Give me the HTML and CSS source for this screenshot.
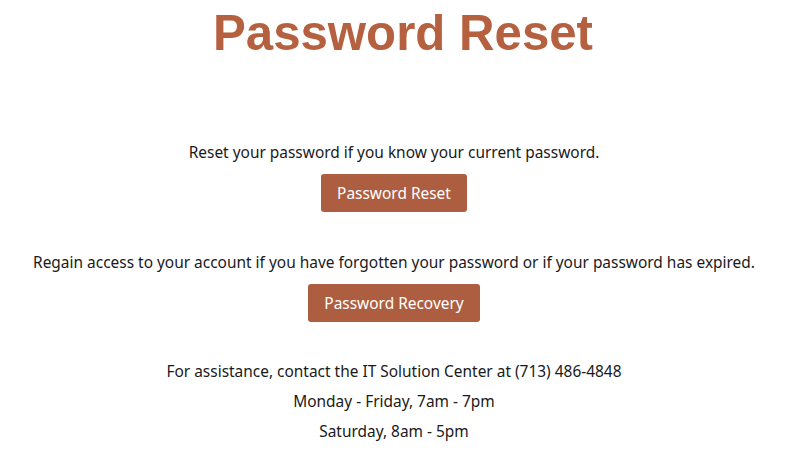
FILE: index.html
```html
<!DOCTYPE html>
<html lang="en">
<head>
<meta charset="utf-8">
<title>Password Reset</title>
<link rel="stylesheet" href="styles.css">
</head>
<body>
<main class="page">
  <h1 class="title">Password Reset</h1>
  <section class="block block-first">
    <p class="desc">Reset your password if you know your current password.</p>
    <a class="btn" href="#">Password Reset</a>
  </section>
  <section class="block">
    <p class="desc">Regain access to your account if you have forgotten your password or if your password has expired.</p>
    <a class="btn" href="#">Password Recovery</a>
  </section>
  <section class="contact">
    <p>For assistance, contact the IT Solution Center at (713) 486-4848</p>
    <p>Monday - Friday, 7am - 7pm</p>
    <p>Saturday, 8am - 5pm</p>
  </section>
</main>
</body>
</html>
```
FILE: styles.css
```css
html, body {
  margin: 0;
  padding: 0;
  background: #ffffff;
}
body {
  font-family: "Noto Sans", "Open Sans", sans-serif;
  font-size: 15.45px;
  color: #1a1a1a;
}
.page {
  display: flex;
  flex-direction: column;
  align-items: center;
  text-align: center;
  padding-right: 3px;
}
.title {
  margin: 3px 0 0;
  padding-left: 18px;
  font-family: "Liberation Sans", Arial, sans-serif;
  font-weight: bold;
  font-size: 49.2px;
  line-height: 60px;
  color: #b5603e;
}
.block {
  display: flex;
  flex-direction: column;
  align-items: center;
}
.block-first {
  margin-top: 77px;
}
.block + .block {
  margin-top: 38px;
}
.desc {
  margin: 0;
  line-height: 24px;
}
.btn {
  margin-top: 10px;
  display: inline-block;
  padding: 7px 16px;
  line-height: 24px;
  background: #ad5e41;
  color: #ffffff;
  text-decoration: none;
  border-radius: 3px;
}
.contact {
  margin-top: 34px;
}
.contact p {
  margin: 0;
  line-height: 30px;
}
```
